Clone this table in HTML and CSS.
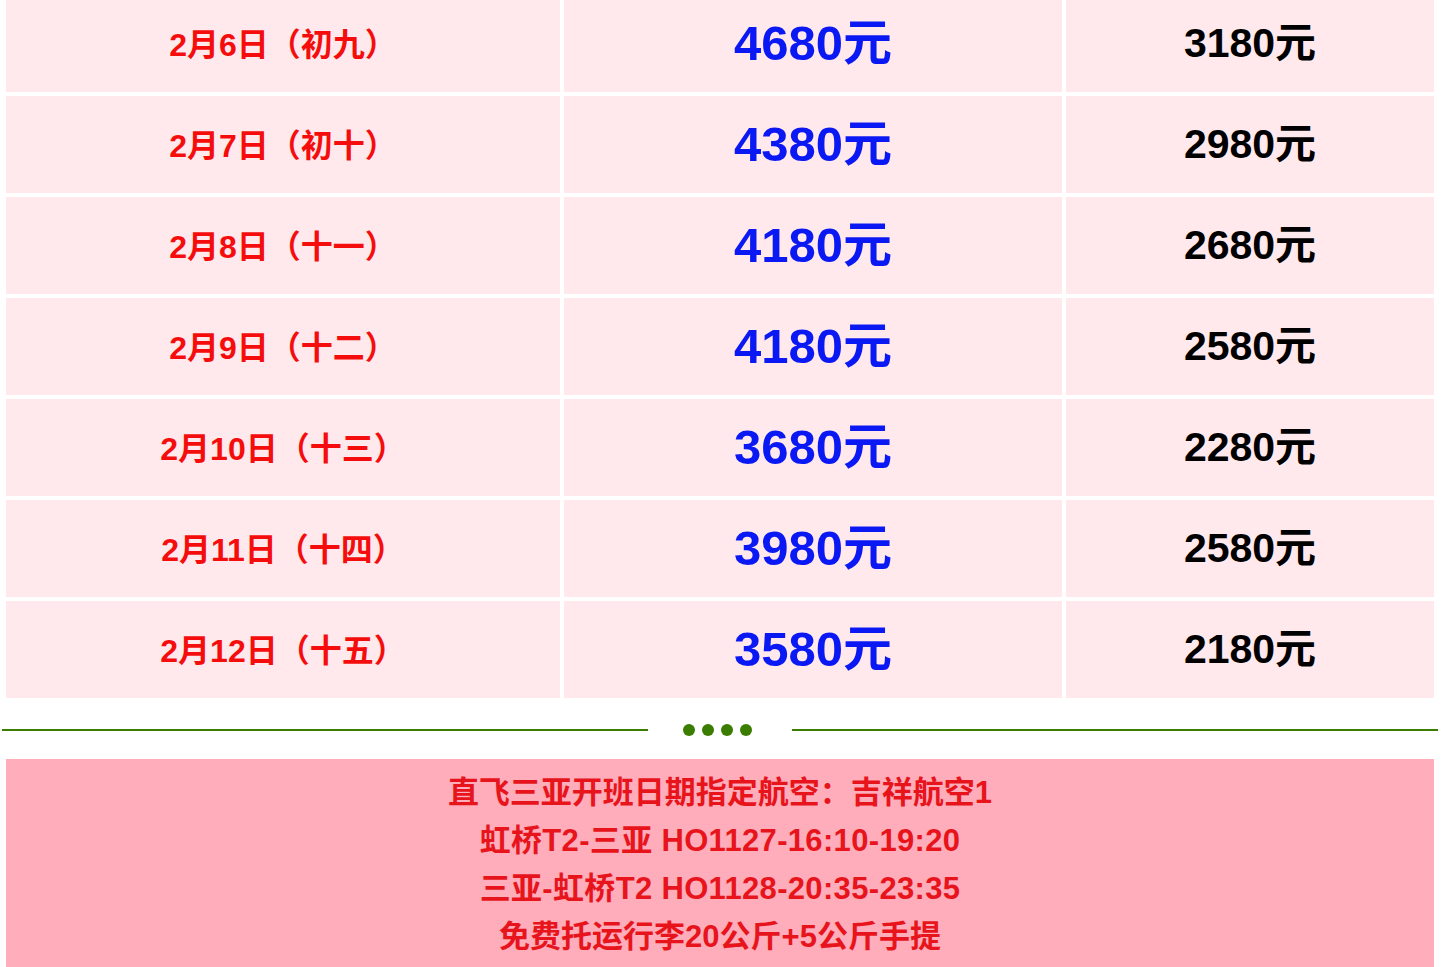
FILE: index.html
```html
<!DOCTYPE html>
<html lang="zh-CN">
<head>
<meta charset="utf-8">
<title>直飞三亚价格表</title>
<link rel="stylesheet" href="styles.css">
</head>
<body>
<div class="page">
  <table class="prices">
    <tbody>
      <tr><td class="date">2月6日（初九）</td><td class="adult">4680元</td><td class="child">3180元</td></tr>
      <tr><td class="date">2月7日（初十）</td><td class="adult">4380元</td><td class="child">2980元</td></tr>
      <tr><td class="date">2月8日（十一）</td><td class="adult">4180元</td><td class="child">2680元</td></tr>
      <tr><td class="date">2月9日（十二）</td><td class="adult">4180元</td><td class="child">2580元</td></tr>
      <tr><td class="date">2月10日（十三）</td><td class="adult">3680元</td><td class="child">2280元</td></tr>
      <tr><td class="date">2月11日（十四）</td><td class="adult">3980元</td><td class="child">2580元</td></tr>
      <tr><td class="date">2月12日（十五）</td><td class="adult">3580元</td><td class="child">2180元</td></tr>
    </tbody>
  </table>
  <div class="divider">
    <span class="line"></span>
    <span class="dots"><i></i><i></i><i></i><i></i></span>
    <span class="line"></span>
  </div>
  <div class="notice">
    <p>直飞三亚开班日期指定航空：吉祥航空1</p>
    <p class="flight">虹桥T2-三亚 HO1127-16:10-19:20</p>
    <p class="flight">三亚-虹桥T2 HO1128-20:35-23:35</p>
    <p>免费托运行李20公斤+5公斤手提</p>
  </div>
</div>
</body>
</html>
```

FILE: styles.css
```css
html, body {
  margin: 0;
  padding: 0;
  background: #ffffff;
  overflow: hidden;
}
body {
  font-family: "Liberation Sans", "Noto Sans CJK SC", sans-serif;
  font-weight: bold;
}
.page {
  width: 1436px;
  margin: -9px 0 0 2px;
}
.prices {
  width: 100%;
  border-collapse: separate;
  border-spacing: 4px;
  table-layout: fixed;
}
.prices td {
  background: #ffe9ec;
  height: 97px;
  padding: 0;
  text-align: center;
  vertical-align: middle;
  line-height: 1;
}
.prices td.date {
  width: 554px;
  height: 95px;
  padding-top: 2px;
  color: #f50d0d;
  font-size: 32px;
}
.prices td.adult {
  width: 498px;
  color: #0a18f3;
  font-size: 49px;
}
.prices td.child {
  color: #000000;
  font-size: 41px;
}
.divider {
  display: flex;
  align-items: center;
  height: 58px;
  margin-top: -1px;
}
.divider .line {
  flex: 1;
  height: 2px;
  background: #3a7d00;
}
.divider .dots {
  width: 144px;
  display: flex;
  justify-content: center;
  gap: 7px;
  padding-right: 6px;
  box-sizing: border-box;
}
.divider .dots i {
  display: block;
  width: 12px;
  height: 12px;
  border-radius: 50%;
  background: #3a7d00;
}
.notice {
  margin: 0 4px;
  background: #ffadbb;
  padding: 10px 0 20px;
  text-align: center;
  color: #e8141c;
  font-size: 31px;
}
.notice p {
  margin: 0;
  line-height: 48px;
}
.notice p.flight {
  letter-spacing: 0.33px;
}
```
